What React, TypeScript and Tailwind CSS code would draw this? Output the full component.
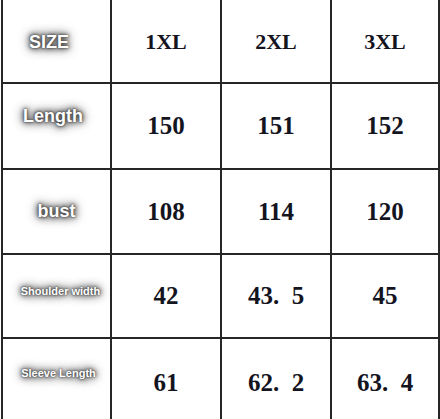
import React from 'react';

// size chart: label column + three size columns
type Row = {
  label: string;
  labelClass: string;
  values: string[];
};

const glow =
  '[text-shadow:0_0_2px_#333,0_0_4px_#444,0_0_7px_#555,0_0_10px_#777,0_0_14px_#999]';

const rows: Row[] = [
  { label: 'SIZE', labelClass: 'text-[18px] pr-[15px] pt-[2px]', values: ['1XL', '2XL', '3XL'] },
  { label: 'Length', labelClass: 'text-[18px] pr-[7px] pb-[20px]', values: ['150', '151', '152'] },
  { label: 'bust', labelClass: 'text-[18px] pb-[1px]', values: ['108', '114', '120'] },
  { label: 'Shoulder width', labelClass: 'text-[11px] pl-[8px] pb-[10px]', values: ['42', '43.\u20025', '45'] },
  { label: 'Sleeve Length', labelClass: 'text-[11px] pl-[4px] pb-[20px]', values: ['61', '62.\u20022', '63.\u20024'] },
];

const App: React.FC = () => {
  return (
    <div className="w-[440px] h-[419px] overflow-hidden bg-white">
      <div className="ml-[1px] w-[439px] bg-[#262626] px-[2px] grid grid-cols-[107px_108px_108px_106px] grid-rows-[82px_84px_83px_82px_88px] gap-[2px]">
        {rows.map((row, i) => (
          <React.Fragment key={row.label}>
            <div className="bg-white flex items-center justify-center">
              <span
                className={`font-bold text-white whitespace-nowrap ${glow} ${row.labelClass}`}
                style={{ fontFamily: '"Liberation Sans", Arial, sans-serif' }}
              >
                {row.label}
              </span>
            </div>
            {row.values.map((v) => (
              <div key={v} className="bg-white flex items-center justify-center">
                <span
                  className={`font-bold text-[#14141f] whitespace-nowrap ${i === 0 ? 'text-[22px]' : 'text-[25px]'}`}
                  style={{ fontFamily: '"Liberation Serif", "Times New Roman", serif' }}
                >
                  {v}
                </span>
              </div>
            ))}
          </React.Fragment>
        ))}
      </div>
    </div>
  );
};

export default App;
